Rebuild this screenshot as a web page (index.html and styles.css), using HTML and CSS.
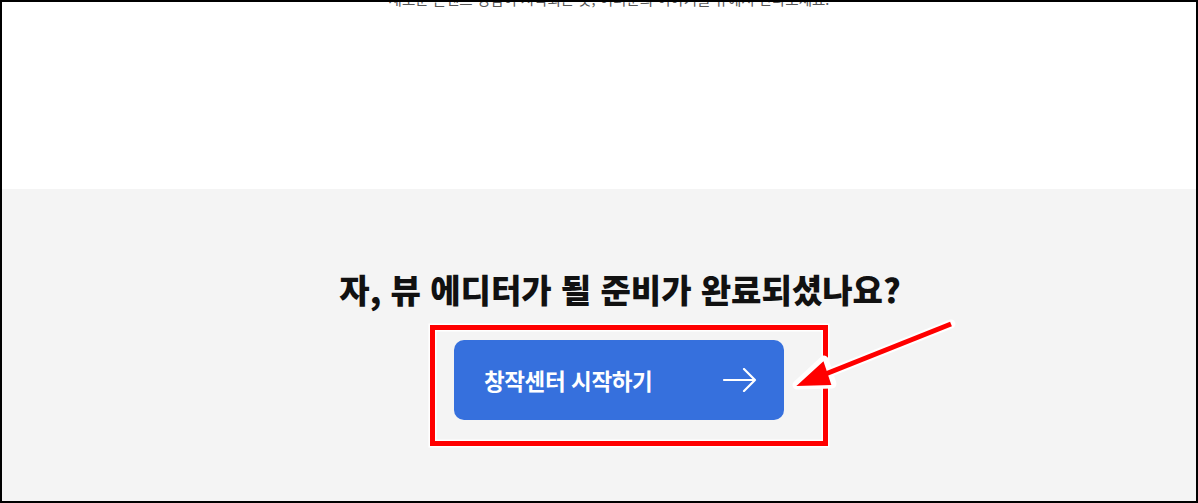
FILE: index.html
```html
<!DOCTYPE html>
<html lang="ko">
<head>
  <meta charset="UTF-8">
  <meta name="viewport" content="width=device-width, initial-scale=1.0">
  <title>뷰 에디터</title>
  <link rel="stylesheet" href="styles.css">
</head>
<body>
  <div class="frame">
    <section class="intro">
      <p class="intro-text">새로운 콘텐츠 경험이 시작되는 곳, 여러분의 이야기를 뷰에서 만나보세요.</p>
    </section>
    <section class="cta">
      <h2>자, 뷰 에디터가 될 준비가 완료되셨나요?</h2>
      <a class="start-btn" href="#">
        <span>창작센터 시작하기</span>
        <svg class="arrow" width="36" height="24" viewBox="0 0 36 24" fill="none" stroke="#fff" stroke-width="2.2" stroke-linecap="round" stroke-linejoin="round">
          <path d="M2 12h31M22 1l11 11-11 11"/>
        </svg>
      </a>
    </section>
    <!-- 강조 표시 -->
    <svg class="mark" width="1198" height="503" viewBox="0 0 1198 503" fill="none">
      <rect x="432.5" y="327.5" width="393" height="116" stroke="#fff" stroke-width="8"/>
      <rect x="432.5" y="327.5" width="393" height="116" stroke="#f00" stroke-width="5"/>
      <g stroke="#fff" stroke-width="9" stroke-linejoin="round" stroke-linecap="round">
        <path d="M951 324L818 377"/>
        <path d="M797 385l27-25 8 24z" fill="#fff"/>
      </g>
      <g stroke="#f00" stroke-width="5" stroke-linejoin="miter">
        <path d="M951 324L818 377"/>
        <path d="M799 385l24-22 7 21z" fill="#f00" stroke-width="2"/>
      </g>
    </svg>
  </div>
</body>
</html>
```

FILE: styles.css
```css
body {
  margin: 0;
  font-family: 'Noto Sans CJK KR', 'Noto Sans', sans-serif;
}

.frame {
  position: relative;
  width: 1198px;
  height: 503px;
  box-sizing: border-box;
  border: 2px solid #000;
  display: flex;
  flex-direction: column;
  overflow: hidden;
}

.intro {
  height: 187px;
  flex-shrink: 0;
  background: #fff;
}

.intro-text {
  margin: -14px 0 0;
  padding-left: 20px;
  text-align: center;
  font-size: 14.5px;
  color: #555;
}

.cta {
  flex: 1;
  background: #f4f4f4;
  display: flex;
  flex-direction: column;
  align-items: center;
  padding-top: 80px;
}

.cta h2 {
  margin: 0 0 0 42px;
  font-size: 33px;
  font-weight: 900;
  color: #111;
  line-height: 40px;
}

.start-btn {
  flex-shrink: 0;
  margin-top: 31px;
  margin-left: 40px;
  width: 330px;
  height: 80px;
  box-sizing: border-box;
  padding: 0 26px 0 30px;
  display: flex;
  align-items: center;
  justify-content: space-between;
  background: #3670dd;
  border-radius: 10px;
  color: #fff;
  font-size: 22.5px;
  font-weight: 700;
  text-decoration: none;
  letter-spacing: -0.4px;
}

.mark {
  position: absolute;
  left: -2px;
  top: -2px;
  pointer-events: none;
}
```
